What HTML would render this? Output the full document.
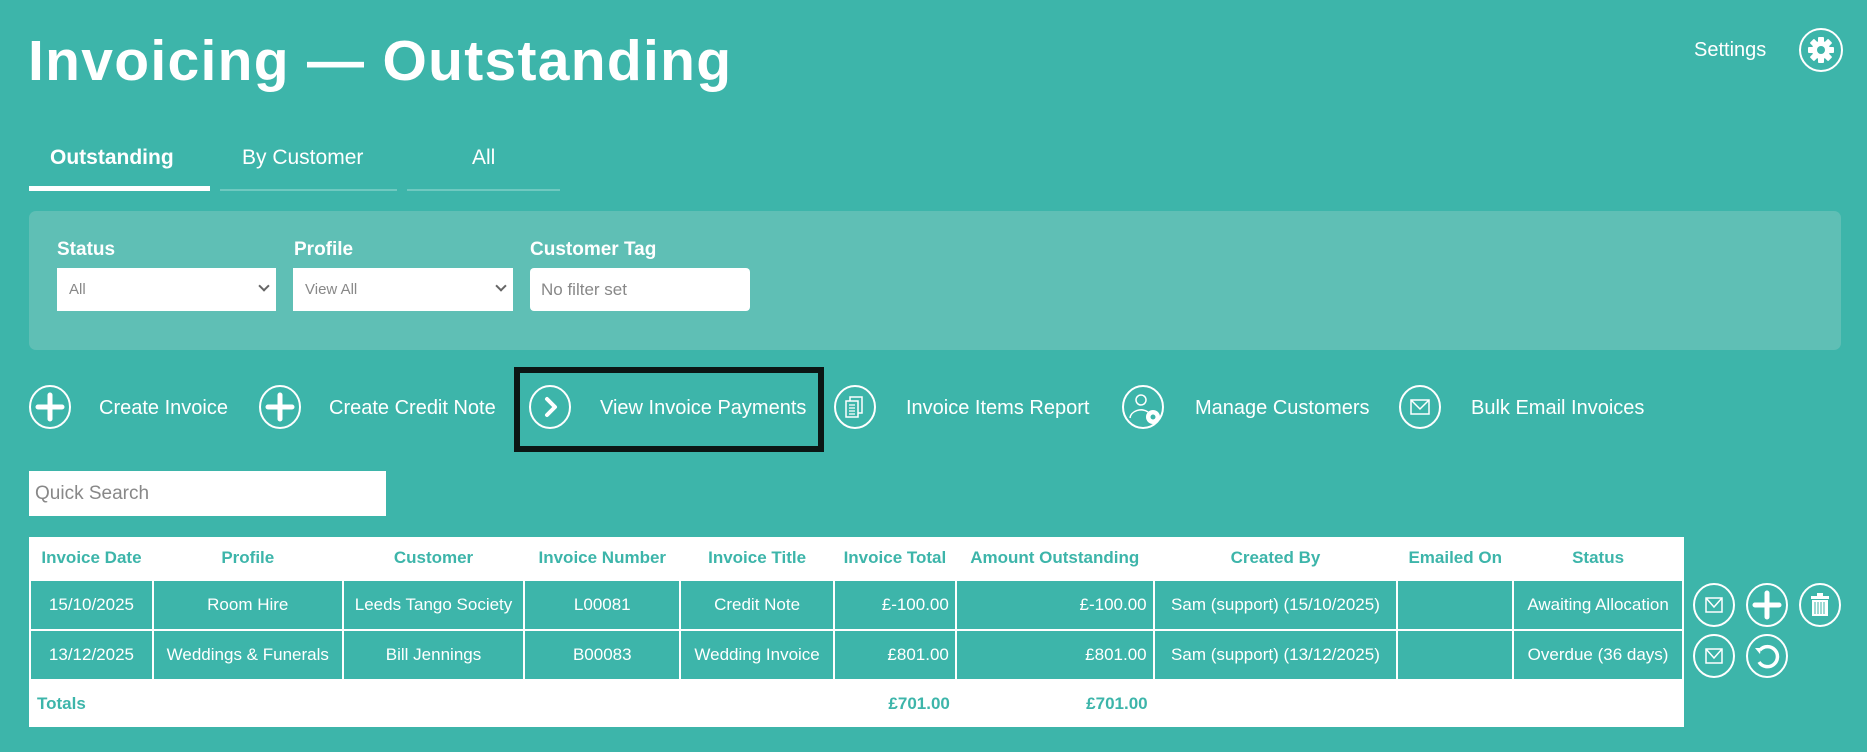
<!DOCTYPE html>
<html><head><meta charset="utf-8"><style>
*{margin:0;padding:0;box-sizing:border-box}
body{width:1867px;height:752px;background:#3db5aa;font-family:"Liberation Sans",sans-serif;color:#fff;position:relative;overflow:hidden}
.a{position:absolute}
h1{position:absolute;left:28px;top:28px;font-size:57px;font-weight:bold;letter-spacing:1.3px;white-space:nowrap}
.tab{position:absolute;top:146px;font-size:21px}
.ul{position:absolute;height:2px;background:#6fc9c0;top:189px}
.panel{position:absolute;left:29px;top:211px;width:1812px;height:139px;background:#5fbfb5;border-radius:7px}
.lbl{position:absolute;top:239px;font-size:19px;font-weight:bold}
.sel{position:absolute;top:268px;height:43px;background:#fff;color:#888;font-size:15px;padding:13px 12px}
.chev{position:absolute;right:8px;top:14px;width:8px;height:8px;border-right:2px solid #666;border-bottom:2px solid #666;transform:rotate(45deg)}
.act{position:absolute;top:397px;font-size:20px;white-space:nowrap}
svg.ic{position:absolute}
table{position:absolute;left:29px;top:537px;width:1655px;border-collapse:collapse;background:#fff;font-size:17px}
th{color:#3db5aa;font-weight:bold;height:43px;font-size:17px}
td{height:50px;text-align:center;background:#3db5aa;border:2px solid #fff}
td.r{text-align:right;padding-right:6px}
tr.tot td{background:#fff;color:#3db5aa;font-weight:bold;height:47px;border:none}
</style></head><body>
<h1>Invoicing — Outstanding</h1>
<div class="a" style="left:1694px;top:39px;font-size:20px">Settings</div>
<svg class="ic" style="left:1798px;top:27px" width="46" height="46" viewBox="0 0 46 46"><circle cx="23" cy="23" r="21" fill="none" stroke="#fff" stroke-width="2"/><g fill="#fff" transform="translate(23 23)"><circle r="9"/><g><rect x="-3" y="-13" width="6" height="26" rx="1"/><rect x="-3" y="-13" width="6" height="26" rx="1" transform="rotate(45)"/><rect x="-3" y="-13" width="6" height="26" rx="1" transform="rotate(90)"/><rect x="-3" y="-13" width="6" height="26" rx="1" transform="rotate(135)"/></g><circle r="4" fill="#3db5aa"/></g></svg>

<div class="tab" style="left:50px;font-weight:bold">Outstanding</div>
<div class="tab" style="left:242px">By Customer</div>
<div class="tab" style="left:472px">All</div>
<div class="a" style="left:29px;top:186px;width:181px;height:5px;background:#fff"></div>
<div class="ul" style="left:220px;width:177px"></div>
<div class="ul" style="left:407px;width:153px"></div>

<div class="panel"></div>
<div class="lbl" style="left:57px">Status</div>
<div class="lbl" style="left:294px">Profile</div>
<div class="lbl" style="left:530px">Customer Tag</div>
<div class="sel" style="left:57px;width:219px">All<div class="chev"></div></div>
<div class="sel" style="left:293px;width:220px">View All<div class="chev"></div></div>
<div class="sel" style="left:530px;width:220px;border-radius:4px;font-size:17px;padding:12px 11px">No filter set</div>

<svg width="0" height="0" style="position:absolute"><defs>
<g id="circ"><ellipse cx="22" cy="22" rx="20" ry="21" fill="none" stroke="#fff" stroke-width="2"/></g></defs></svg>
<svg class="ic" style="left:28px;top:385px" width="44" height="44"><use href="#circ"/><path d="M22 10v24M10 22h24" stroke="#fff" stroke-width="5" stroke-linecap="round"/></svg>
<div class="act" style="left:99px">Create Invoice</div>
<svg class="ic" style="left:258px;top:385px" width="44" height="44"><use href="#circ"/><path d="M22 10v24M10 22h24" stroke="#fff" stroke-width="5" stroke-linecap="round"/></svg>
<div class="act" style="left:329px">Create Credit Note</div>
<div class="a" style="left:514px;top:367px;width:310px;height:85px;border:6px solid #0b1614"></div>
<svg class="ic" style="left:528px;top:385px" width="44" height="44"><use href="#circ"/><path d="M19 14l8 8-8 8" fill="none" stroke="#fff" stroke-width="4" stroke-linecap="round" stroke-linejoin="round"/></svg>
<div class="act" style="left:600px">View Invoice Payments</div>
<svg class="ic" style="left:833px;top:385px" width="44" height="44"><use href="#circ"/><rect x="17" y="12" width="12" height="16" fill="none" stroke="#fff" stroke-width="1.5"/><rect x="13" y="16" width="12" height="16" fill="#3db5aa" stroke="#fff" stroke-width="1.5"/><path d="M16 20h6M16 23h6M16 26h6M16 29h6" stroke="#fff" stroke-width="1.2"/></svg>
<div class="act" style="left:906px">Invoice Items Report</div>
<svg class="ic" style="left:1121px;top:385px" width="46" height="46"><use href="#circ"/><circle cx="20" cy="15" r="5" fill="none" stroke="#fff" stroke-width="1.5"/><path d="M9 33a11 9 0 0 1 18-6" fill="none" stroke="#fff" stroke-width="1.5"/><circle cx="32" cy="32" r="7" fill="#fff"/><circle cx="32" cy="32" r="2.5" fill="#3db5aa"/></svg>
<div class="act" style="left:1195px">Manage Customers</div>
<svg class="ic" style="left:1398px;top:385px" width="44" height="44"><use href="#circ"/><rect x="13" y="15" width="18" height="14" fill="none" stroke="#fff" stroke-width="1.5"/><path d="M13 15l9 9 9-9" fill="none" stroke="#fff" stroke-width="1.5"/></svg>
<div class="act" style="left:1471px">Bulk Email Invoices</div>

<div class="a" style="left:29px;top:471px;width:357px;height:45px;background:#fff;color:#888;font-size:19px;padding:12px 6px">Quick Search</div>

<table>
<colgroup><col style="width:123px"><col style="width:190px"><col style="width:182px"><col style="width:156px"><col style="width:154px"><col style="width:122px"><col style="width:198px"><col style="width:244px"><col style="width:116px"><col style="width:170px"></colgroup>
<tr><th>Invoice Date</th><th>Profile</th><th>Customer</th><th>Invoice Number</th><th>Invoice Title</th><th>Invoice Total</th><th>Amount Outstanding</th><th>Created By</th><th>Emailed On</th><th>Status</th></tr>
<tr><td>15/10/2025</td><td>Room Hire</td><td>Leeds Tango Society</td><td>L00081</td><td>Credit Note</td><td class="r">£-100.00</td><td class="r">£-100.00</td><td>Sam (support) (15/10/2025)</td><td></td><td>Awaiting Allocation</td></tr>
<tr><td>13/12/2025</td><td>Weddings &amp; Funerals</td><td>Bill Jennings</td><td>B00083</td><td>Wedding Invoice</td><td class="r">£801.00</td><td class="r">£801.00</td><td>Sam (support) (13/12/2025)</td><td></td><td>Overdue (36 days)</td></tr>
<tr class="tot"><td style="text-align:left;padding-left:7px">Totals</td><td></td><td></td><td></td><td></td><td class="r">£701.00</td><td class="r">£701.00</td><td></td><td></td><td></td></tr>
</table>

<svg class="ic" style="left:1692px;top:583px" width="44" height="44"><use href="#circ"/><rect x="14" y="15" width="16" height="14" fill="none" stroke="#fff" stroke-width="1.5"/><path d="M14 15l8 9 8-9" fill="none" stroke="#fff" stroke-width="1.5"/></svg>
<svg class="ic" style="left:1745px;top:583px" width="44" height="44"><use href="#circ"/><path d="M22 10v24M10 22h24" stroke="#fff" stroke-width="5" stroke-linecap="round"/></svg>
<svg class="ic" style="left:1798px;top:583px" width="44" height="44"><use href="#circ"/><rect x="13" y="13" width="18" height="3" fill="#fff"/><rect x="19" y="10" width="6" height="3" fill="#fff"/><rect x="14" y="17" width="16" height="16" fill="#fff"/><path d="M17 19v12M20 19v12M23 19v12M26 19v12" stroke="#3db5aa" stroke-width="1"/></svg>
<svg class="ic" style="left:1692px;top:634px" width="44" height="44"><use href="#circ"/><rect x="14" y="15" width="16" height="14" fill="none" stroke="#fff" stroke-width="1.5"/><path d="M14 15l8 9 8-9" fill="none" stroke="#fff" stroke-width="1.5"/></svg>
<svg class="ic" style="left:1745px;top:634px" width="44" height="44"><use href="#circ"/><path d="M15 16a10 10 0 1 1 -1 12" fill="none" stroke="#fff" stroke-width="3.5"/><path d="M10 14l6 0 -1 6z" fill="#fff"/></svg>
</body></html>
